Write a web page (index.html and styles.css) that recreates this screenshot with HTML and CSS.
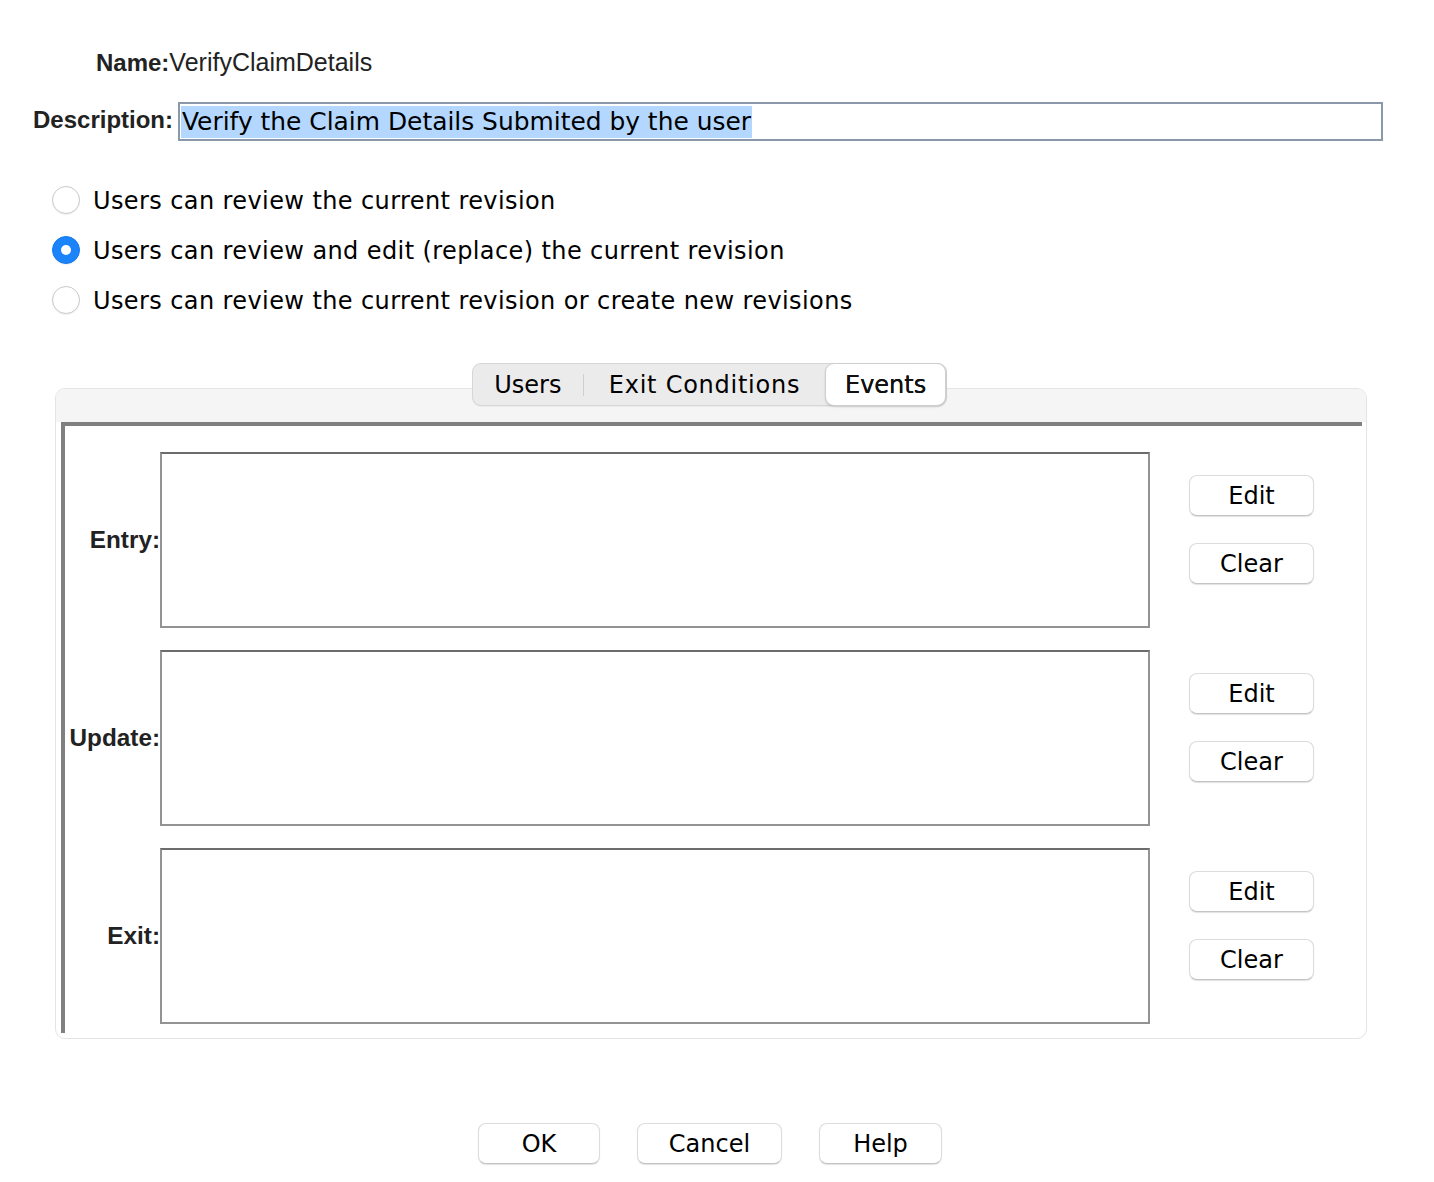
FILE: index.html
```html
<!DOCTYPE html>
<html>
<head>
<meta charset="utf-8">
<link rel="stylesheet" href="styles.css">
</head>
<body>
<div class="dialog">
  <div class="name-row"><span class="lbl">Name:</span><span class="name-val">VerifyClaimDetails</span></div>
  <div class="desc-row">
    <span class="lbl desc-lbl">Description:</span>
    <div class="desc-field"><span class="sel">Verify the Claim Details Submited by the user</span></div>
  </div>
  <div class="radios">
    <div class="radio-row"><span class="radio"></span><span class="rtext">Users can review the current revision</span></div>
    <div class="radio-row"><span class="radio checked"></span><span class="rtext">Users can review and edit (replace) the current revision</span></div>
    <div class="radio-row"><span class="radio"></span><span class="rtext">Users can review the current revision or create new revisions</span></div>
  </div>
  <div class="tabs-wrap">
    <div class="segmented">
      <span class="seg seg-users">Users</span>
      <span class="seg-sep"></span>
      <span class="seg seg-exit">Exit Conditions</span>
      <span class="seg seg-events active">Events</span>
    </div>
  </div>
  <div class="panel">
    <div class="panel-top"></div>
    <div class="inner">
      <div class="ev-row">
        <span class="lbl ev-lbl">Entry:</span>
        <div class="ev-area"></div>
        <div class="ev-btns"><button class="btn">Edit</button><button class="btn">Clear</button></div>
      </div>
      <div class="ev-row">
        <span class="lbl ev-lbl">Update:</span>
        <div class="ev-area"></div>
        <div class="ev-btns"><button class="btn">Edit</button><button class="btn">Clear</button></div>
      </div>
      <div class="ev-row">
        <span class="lbl ev-lbl">Exit:</span>
        <div class="ev-area"></div>
        <div class="ev-btns"><button class="btn">Edit</button><button class="btn">Clear</button></div>
      </div>
    </div>
  </div>
  <div class="footer">
    <button class="btn fbtn ok">OK</button>
    <button class="btn fbtn cancel">Cancel</button>
    <button class="btn fbtn help">Help</button>
  </div>
</div>
</body>
</html>
```
FILE: styles.css
```css
html, body {
  margin: 0;
  padding: 0;
  background: #ffffff;
}
.dialog {
  width: 1434px;
  height: 1182px;
  position: relative;
  font-family: "DejaVu Sans", sans-serif;
  color: #000;
}
.lbl {
  font-family: "Liberation Sans", Arial, sans-serif;
  font-weight: bold;
  font-size: 24.3px;
  color: #222;
}
.name-row {
  padding-top: 48px;
  padding-left: 96px;
  height: 28px;
  line-height: 28px;
}
.name-row .lbl {
  font-size: 24px;
}
.name-val {
  font-family: "Liberation Sans", Arial, sans-serif;
  font-size: 25px;
  color: #222;
}
.desc-row {
  margin-top: 26px;
  display: flex;
  align-items: center;
  padding-left: 33px;
  height: 39px;
}
.desc-lbl {
  font-size: 24px;
  width: 145px;
  margin-top: -3px;
}
.desc-field {
  box-sizing: border-box;
  width: 1205px;
  height: 39px;
  border: 2px solid #8b98aa;
  background: #fff;
  padding: 2px 1px;
  display: flex;
  align-items: center;
}
.sel {
  background: #b3d7ff;
  font-size: 24.9px;
  line-height: 32px;
  padding: 0 1px;
  color: #000;
}
.radios {
  margin-top: 34px;
  padding-left: 52px;
  display: flex;
  flex-direction: column;
}
.radio-row {
  height: 50px;
  display: flex;
  align-items: center;
}
.radio {
  box-sizing: border-box;
  width: 28px;
  height: 28px;
  border-radius: 50%;
  border: 1px solid #c9c9c9;
  background: #fff;
  box-shadow: 0 1px 1px rgba(0,0,0,0.06);
  margin-right: 13px;
  position: relative;
  flex: none;
}
.radio.checked {
  background: #1b84fa;
  border-color: #1678ee;
}
.radio.checked::after {
  content: "";
  position: absolute;
  left: 8px;
  top: 8px;
  width: 10px;
  height: 10px;
  border-radius: 50%;
  background: #fff;
}
.rtext {
  font-size: 24px;
  letter-spacing: 0.4px;
  position: relative;
  top: 1px;
}
.tabs-wrap {
  margin-top: 38px;
  display: flex;
  justify-content: center;
  padding-right: 15px;
  height: 43px;
  margin-bottom: -18px;
  position: relative;
  z-index: 2;
}
.segmented {
  box-sizing: border-box;
  height: 43px;
  width: 475px;
  border: 1px solid #d6d6d6;
  border-radius: 9px;
  background: #ebebeb;
  display: flex;
  align-items: center;
  font-size: 24px;
  box-shadow: 0 1px 1px rgba(0,0,0,0.05);
}
.seg {
  display: flex;
  align-items: center;
  justify-content: center;
  height: 100%;
}
.seg-users { width: 110px; }
.seg-sep {
  width: 1px;
  height: 22px;
  background: #cfcfcf;
}
.seg-exit {
  width: 242px;
  letter-spacing: 0.75px;
}
.seg-events {
  box-sizing: border-box;
  width: 121px;
  height: 43px;
  margin-top: -1px;
  margin-bottom: -1px;
  background: #fff;
  border: 1px solid #cfcfcf;
  border-radius: 9px;
  box-shadow: 0 1px 2px rgba(0,0,0,0.15);
  color: #111;
  text-shadow: 0 0 0.6px #000;
}
.panel {
  box-sizing: border-box;
  margin-left: 55px;
  width: 1312px;
  height: 651px;
  border: 1px solid #e4e4e4;
  border-radius: 10px;
  background: #fff;
  overflow: hidden;
  display: flex;
  flex-direction: column;
}
.panel-top {
  height: 33px;
  background: #f5f5f5;
}
.inner {
  flex: 1;
  margin: 0 4px 5px 5px;
  border-top: 4px solid #808080;
  border-left: 4px solid #808080;
  background: #fff;
  padding-top: 26px;
  display: flex;
  flex-direction: column;
  gap: 22px;
}
.ev-row {
  display: flex;
  height: 176px;
  align-items: center;
}
.ev-lbl {
  width: 95px;
  text-align: right;
  flex: none;
}
.ev-area {
  box-sizing: border-box;
  width: 990px;
  height: 176px;
  flex: none;
  border: 2px solid #939393;
  border-top-color: #6c6c6c;
  background: #fff;
}
.ev-btns {
  margin-left: 39px;
  align-self: flex-start;
  padding-top: 23px;
  display: flex;
  flex-direction: column;
  gap: 27px;
}
.btn {
  box-sizing: border-box;
  font-family: "DejaVu Sans", sans-serif;
  font-size: 24px;
  color: #000;
  background: #fff;
  border: 1px solid #dcdcdc;
  border-bottom-color: #c4c4c4;
  border-radius: 8px;
  box-shadow: 0 1px 1px rgba(0,0,0,0.12);
  height: 41px;
  width: 125px;
  padding: 0;
  margin: 0;
  display: flex;
  align-items: center;
  justify-content: center;
}
.footer {
  margin-top: 84px;
  display: flex;
  justify-content: flex-start;
  padding-left: 478px;
  gap: 37px;
}
.fbtn.ok { width: 122px; }
.fbtn.cancel { width: 145px; }
.fbtn.help { width: 123px; }
```
